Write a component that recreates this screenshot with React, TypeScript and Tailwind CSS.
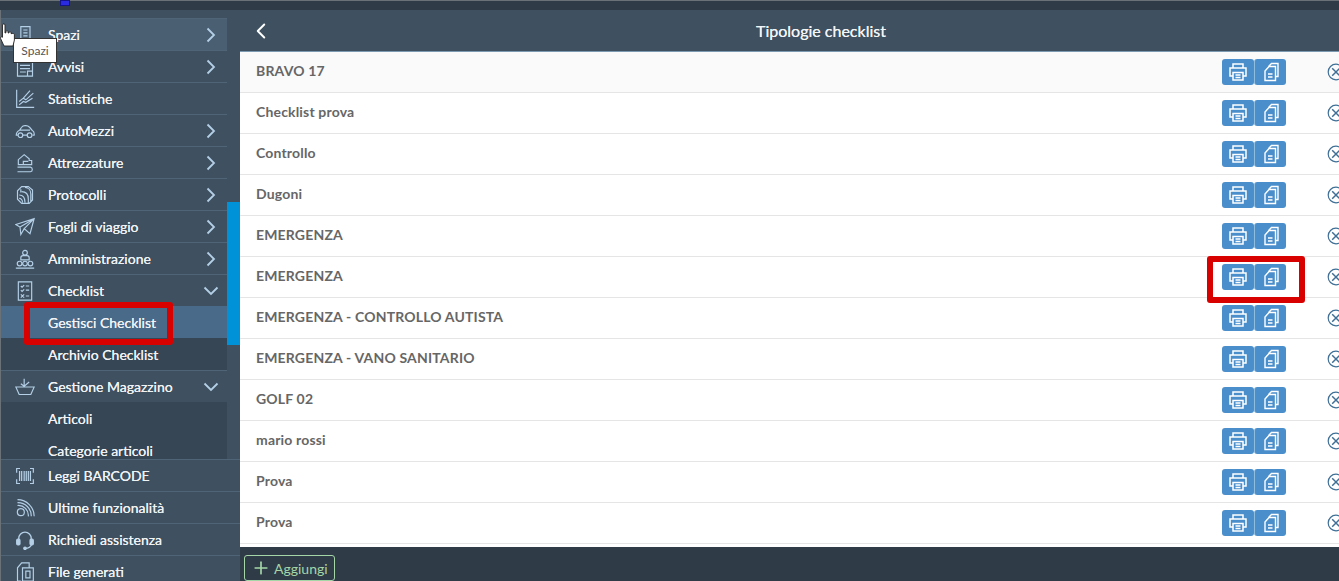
import { ChevronLeft, Plus } from "lucide-react";
import type { ReactNode } from "react";

const FONT = "font-['Lato','Noto_Sans',sans-serif]";

// stroke-only menu glyphs, all on a 24 box
function Glyph({ children }: { children: ReactNode }) {
  return (
    <svg viewBox="0 0 24 24" className="h-[20px] w-[20px]" fill="none" stroke="#b4cfe6" strokeWidth="1.4">
      {children}
    </svg>
  );
}

const ICONS: Record<string, ReactNode> = {
  spazi: (
    <Glyph>
      <path d="M7 22V2h11v20M3 22h18M10 6h5M10 9.5h5M10 13h5M10 16.5h5" />
    </Glyph>
  ),
  avvisi: (
    <Glyph>
      <path d="M3 1h18v22H3zM6 6h12M6 10h12M6 14h12M6 18h7M15 23v-6h6" />
    </Glyph>
  ),
  statistiche: (
    <Glyph>
      <path d="M2 1v21h21M5 15l5-4 3 2 9-8M5 19l5-4 3 1 8-5M10 11l8-9" />
    </Glyph>
  ),
  auto: (
    <Glyph>
      <path d="M3.5 17H1.5c0-3 1-4.5 4-6L8 7.500c1-1.500 2-2 4-2h1c2 0 3 .5 4.500 2l3 3.500c2 1 3 2.500 2.500 6h-2M9 17h6M6 11h12" />
      <circle cx="6.5" cy="17" r="2.8" />
      <circle cx="17.5" cy="17" r="2.8" />
    </Glyph>
  ),
  attrezzature: (
    <Glyph>
      <path d="M4 14V8l7-6 6 5v2h3v5zM10 14v-4h6M3 17h15.5a2.8 2.8 0 0 1 0 5.500H3" />
    </Glyph>
  ),
  protocolli: (
    <Glyph>
      <path d="M3 17V7l5-5h8l5 4v12l-4 4H8zM7 5v4M12 3c4 0 7 3 7 8v9M8 8c5 0 8 3 8 9v5M5 12c4 0 7 3 7 9M5 16c2 0 4 2 4 5" />
    </Glyph>
  ),
  fogli: (
    <Glyph>
      <path d="M1 9 23 2l-5 18-7-6-4 7-1-9zM6 12 23 2M11 14 23 2" />
    </Glyph>
  ),
  amministrazione: (
    <Glyph>
      <circle cx="12" cy="4.5" r="2.8" />
      <path d="M7 13v-2.500C7 9 8.500 8 9.500 8h5c1 0 2.500 1 2.500 2.500V13H7zM1 23h22" />
      <circle cx="5.5" cy="17.5" r="2.8" />
      <circle cx="12" cy="17.5" r="2.8" />
      <circle cx="18.5" cy="17.5" r="2.8" />
    </Glyph>
  ),
  checklist: (
    <Glyph>
      <path d="M4 1h16v22H4zM7 6l1.500 1.500L11 5M13 6h4M7 11l1.500 1.500L11 10M13 11h4M7 16l4 4M11 16l-4 4M13 18h4" />
    </Glyph>
  ),
  magazzino: (
    <Glyph>
      <path d="M1 12h22l-4 9H5zM11 2v9l6-5M7 8l4 3" />
    </Glyph>
  ),
  barcode: (
    <Glyph>
      <path d="M2 8V3h4M18 3h4v5M2 16v5h4M18 21h4v-5" />
      <path d="M5.500 6v12M8 6v12M11 6v12M13.500 6v12M16 6v12M18.500 6v12" strokeWidth="1.5" />
    </Glyph>
  ),
  rss: (
    <Glyph>
      <circle cx="7" cy="17" r="4.2" />
      <path d="M3 9a12 12 0 0 1 13 13M3 5.500a16 16 0 0 1 16.500 16.500M3 2a20 20 0 0 1 20 20" />
    </Glyph>
  ),
  assistenza: (
    <Glyph>
      <path d="M4.500 13v-3a7.500 7.500 0 0 1 15 0v3M12 22c4 0 7-1 8-5" strokeWidth="1.6" />
      <rect x="2" y="11" width="4" height="7" rx="1.5" fill="#b4cfe6" />
      <rect x="18" y="11" width="4" height="7" rx="1.5" fill="#b4cfe6" />
      <circle cx="12" cy="22" r="1.5" fill="#b4cfe6" />
    </Glyph>
  ),
  file: (
    <Glyph>
      <path d="M7 23H3V7l5-6h9v6M9 7h13v16H9zM13 11h5v8h-5z" />
    </Glyph>
  ),
};

type MenuRowProps = {
  icon?: string;
  label: string;
  arrow?: "right" | "down";
  kind?: "item" | "sub" | "hover" | "active";
};

function MenuRow({ icon, label, arrow, kind = "item" }: MenuRowProps) {
  const bg =
    kind === "hover"
      ? "border-[#4f6476] bg-[#4a5f72]"
      : kind === "active"
        ? "border-[#4a6a89] bg-[#4a6a89]"
        : kind === "sub"
          ? "border-[#374655] bg-[#374655]"
          : "border-[#4f6476]";
  return (
    <div className={`flex h-[32px] shrink-0 items-center border-t ${bg}`}>
      <div className="flex w-[47px] shrink-0 justify-center pl-[1px]">{icon && ICONS[icon]}</div>
      <span className="flex-1 text-[14px] text-[#f0f3f5] [text-shadow:0_0_0.4px_#f0f3f5]">{label}</span>
      {arrow === "right" && (
        <svg viewBox="0 0 10 16" className="mr-[11px] h-[16px] w-[10px]" fill="none" stroke="#b4cfe6" strokeWidth="1.8">
          <path d="M1.5 1.5 8 8l-6.5 6.5" />
        </svg>
      )}
      {arrow === "down" && (
        <svg viewBox="0 0 16 10" className="mr-[8px] h-[10px] w-[16px]" fill="none" stroke="#b4cfe6" strokeWidth="1.8">
          <path d="M1.5 1.5 8 8l6.5-6.5" />
        </svg>
      )}
    </div>
  );
}

function PrinterIcon() {
  return (
    <svg viewBox="0 0 20 20" className="h-[20px] w-[20px]" fill="none" stroke="#fff" strokeWidth="1.5">
      <path d="M5 6V2h10v4M5 14H2V6h16v8h-3M5 10.500h10V18H5zM7.500 13h5M7.500 15.500h5" />
    </svg>
  );
}

function CopyIcon() {
  return (
    <svg viewBox="0 0 20 20" className="h-[20px] w-[20px]" fill="none" stroke="#fff" strokeWidth="1.4">
      <path d="M8 4.500V4l2.500-2.500H17v13h-2.500M8 4.500h6.500v14H4V9zM7 12h4.500M7 15h4.500" />
    </svg>
  );
}

function CloseCircle() {
  return (
    <svg viewBox="0 0 18 18" className="h-[18px] w-[18px]" fill="none" stroke="#3f6f96" strokeWidth="1.2">
      <circle cx="9" cy="9" r="7.8" />
      <path d="M5.2 5.2l7.6 7.6M12.8 5.2l-7.6 7.6" strokeWidth="1.5" />
    </svg>
  );
}

const ROWS = [
  "BRAVO 17",
  "Checklist prova",
  "Controllo",
  "Dugoni",
  "EMERGENZA",
  "EMERGENZA",
  "EMERGENZA - CONTROLLO AUTISTA",
  "EMERGENZA - VANO SANITARIO",
  "GOLF 02",
  "mario rossi",
  "Prova",
  "Prova",
];

export default function App() {
  return (
    <div className={`relative flex h-[581px] w-[1339px] flex-col overflow-hidden bg-[#2f3c48] ${FONT}`}>
      <div className="relative h-[10px] shrink-0 border-t border-[#6b7277] bg-[#2f3c48]">
        <div className="absolute -top-[1px] left-[60px] h-[6px] w-[10px] border border-[#14148a] bg-[#2a2ae0]" />
      </div>
      <div className="flex min-h-0 flex-1">
        <aside className="flex w-[240px] shrink-0 flex-col border-l border-[#6b7277] bg-[#3f5161]">
          <div className="relative h-[449px] shrink-0 overflow-hidden pr-[12px] pt-[8px]">
            <div className="flex flex-col pr-[1px]">
              <MenuRow icon="spazi" label="Spazi" arrow="right" kind="hover" />
              <MenuRow icon="avvisi" label="Avvisi" arrow="right" />
              <MenuRow icon="statistiche" label="Statistiche" />
              <MenuRow icon="auto" label="AutoMezzi" arrow="right" />
              <MenuRow icon="attrezzature" label="Attrezzature" arrow="right" />
              <MenuRow icon="protocolli" label="Protocolli" arrow="right" />
              <MenuRow icon="fogli" label="Fogli di viaggio" arrow="right" />
              <MenuRow icon="amministrazione" label="Amministrazione" arrow="right" />
              <MenuRow icon="checklist" label="Checklist" arrow="down" />
              <MenuRow label="Gestisci Checklist" kind="active" />
              <MenuRow label="Archivio Checklist" kind="sub" />
              <MenuRow icon="magazzino" label="Gestione Magazzino" arrow="down" />
              <MenuRow label="Articoli" kind="sub" />
              <MenuRow label="Categorie articoli" kind="sub" />
            </div>
            <div className="absolute right-0 top-[192px] h-[143px] w-[13px] bg-[#0092d8]" />
          </div>
          <MenuRow icon="barcode" label="Leggi BARCODE" />
          <MenuRow icon="rss" label="Ultime funzionalità" />
          <MenuRow icon="assistenza" label="Richiedi assistenza" />
          <MenuRow icon="file" label="File generati" />
        </aside>
        <main className="flex w-[1162px] shrink-0 flex-col">
          <header className="relative flex h-[42px] shrink-0 items-center justify-center border-b border-[#7d9ab3] bg-[#3f5161]">
            <ChevronLeft className="absolute left-[8px] h-[26px] w-[26px] text-white" strokeWidth={1.8} />
            <span className="text-[16px] text-[#f2f4f6] [text-shadow:0_0_0.4px_#f2f4f6]">Tipologie checklist</span>
          </header>
          <div className="flex h-[495px] shrink-0 flex-col overflow-hidden bg-white">
            {ROWS.map((name, i) => (
              <div
                key={i}
                className={`flex h-[41px] shrink-0 items-center border-b border-[#e5e5e5] pl-[16px] ${i === 0 ? "bg-[#fafafa]" : "bg-white"}`}
              >
                <span className="mb-[3px] flex-1 text-[14px] font-bold tracking-[0.17px] text-[#666666]">{name}</span>
                <div className="flex">
                  <div className="flex h-[26px] w-[32px] items-center justify-center rounded-[3px] bg-[#4a8ecb]">
                    <PrinterIcon />
                  </div>
                  <div className="flex h-[26px] w-[32px] items-center justify-center rounded-[3px] border-l border-[#8fbde0] bg-[#4a8ecb]">
                    <CopyIcon />
                  </div>
                </div>
                <div className="ml-[41px] mr-[57px] flex w-[18px] justify-center">
                  <CloseCircle />
                </div>
              </div>
            ))}
          </div>
          <footer className="flex min-h-0 flex-1 items-end pl-[4px]">
            <button className="flex h-[26px] w-[91px] items-center gap-[3px] rounded-[3px] border border-[#a5d6a7] bg-[#2f3c48] pl-[6px] text-[14px] text-[#a5d6a7]">
              <Plus className="h-[20px] w-[20px]" strokeWidth={2} />
              Aggiungi
            </button>
          </footer>
        </main>
      </div>

      <div className="absolute left-[24px] top-[302px] h-[43px] w-[149px] rounded-[3px] border-[6px] border-[#d90000]" />
      <div className="absolute left-[1207px] top-[256px] h-[47px] w-[98px] rounded-[3px] border-[6px] border-[#d90000]" />

      <div className="absolute left-[13px] top-[38px] flex h-[25px] w-[44px] items-center justify-center border border-[#333] bg-white text-[12px] text-[#555]">
        Spazi
      </div>
      <svg viewBox="0 0 16 24" className="absolute left-0 top-[23px] h-[24px] w-[16px]" fill="#fff" stroke="#222" strokeWidth="0.9">
        <path d="M2.5 2c0-1.5 2.5-1.5 2.5 0v8l1-.3V8.5c0-1 2-1 2 0v1.3l1 .2V9.5c0-1 2-1 2 0v1l1 .2c.8-.6 2.4-.2 2.4 1v5.3L13 23H4L.6 15.5c-.5-1.4 1-2.3 1.9-1.2z" />
      </svg>
    </div>
  );
}
